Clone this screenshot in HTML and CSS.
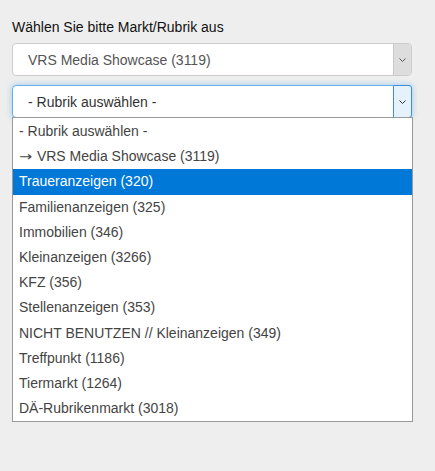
FILE: index.html
```html
<!DOCTYPE html>
<html lang="de">
<head>
    <meta charset="UTF-8">
    <meta name="viewport" content="width=device-width, initial-scale=1.0">
    <title>Markt/Rubrik</title>
    <link rel="stylesheet" href="styles.css">
</head>
<body>
    <div class="rubrik-form">
        <div class="field-label">Wählen Sie bitte Markt/Rubrik aus</div>

        <div class="select">
            <span class="select-value">VRS Media Showcase (3119)</span>
            <span class="select-arrow">
                <svg width="7" height="4" viewBox="0 0 7 4"><path d="M0.5 0.5 L3.5 3.5 L6.5 0.5" fill="none" stroke="#555" stroke-width="1"/></svg>
            </span>
        </div>

        <div class="dropdown">
            <div class="select select-open">
                <span class="select-value">- Rubrik auswählen -</span>
                <span class="select-arrow">
                    <svg width="7" height="4" viewBox="0 0 7 4"><path d="M0.5 0.5 L3.5 3.5 L6.5 0.5" fill="none" stroke="#333" stroke-width="1"/></svg>
                </span>
            </div>
            <ul class="options">
                <li>- Rubrik auswählen -</li>
                <li><span class="sub-arrow">&rarr;</span> VRS Media Showcase (3119)</li>
                <li class="selected">Traueranzeigen (320)</li>
                <li>Familienanzeigen (325)</li>
                <li>Immobilien (346)</li>
                <li>Kleinanzeigen (3266)</li>
                <li>KFZ (356)</li>
                <li>Stellenanzeigen (353)</li>
                <li>NICHT BENUTZEN // Kleinanzeigen (349)</li>
                <li>Treffpunkt (1186)</li>
                <li>Tiermarkt (1264)</li>
                <li>DÄ-Rubrikenmarkt (3018)</li>
            </ul>
        </div>
    </div>
</body>
</html>
```

FILE: styles.css
```css
body {
    background-color: #eeeeee;
    color: #333;
    font-family: Arial, "Liberation Sans", sans-serif;
    margin: 0;
    padding: 0;
}
.rubrik-form {
    padding: 17px 12px;
    width: 400px;
}
.field-label {
    font-size: 14px;
    line-height: 20px;
    color: #111;
    margin-bottom: 6px;
}
.select {
    display: flex;
    align-items: stretch;
    height: 33px;
    box-sizing: border-box;
    background: white;
    border: 1px solid #ccc;
    border-radius: 4px;
    margin-bottom: 9px;
}
.select-value {
    flex: 1;
    display: flex;
    align-items: center;
    padding-left: 15px;
    font-size: 14px;
    color: #555;
}
.select-arrow {
    width: 17px;
    display: flex;
    align-items: center;
    justify-content: center;
    background: #dddddd;
    border-left: 1px solid #c8c8c8;
    border-radius: 0 3px 3px 0;
}
.select-open {
    border-color: #66afe9;
    box-shadow: 0 0 6px rgba(102, 175, 233, 0.6);
    margin-bottom: 0;
}
.select-open .select-value {
    color: #333;
}
.select-open .select-arrow {
    background: #e5f1fb;
    border: 1px solid #3c8fdd;
    margin: -1px -1px -1px 0;
    border-radius: 0 3px 3px 0;
}
.options {
    position: relative;
    width: 401px;
    box-sizing: border-box;
    margin: -1px 0 0;
    padding: 1px 0 0;
    list-style: none;
    background: white;
    border: 1px solid #999;
}
.options li {
    height: 25.2px;
    line-height: 25.2px;
    padding-left: 6px;
    font-size: 14px;
    color: #444;
    white-space: nowrap;
}
.options li.selected {
    background: #0078d7;
    color: white;
}
.sub-arrow {
    display: inline-block;
    width: 14px;
    font-family: "DejaVu Sans", sans-serif;
    font-size: 13px;
    transform: scaleX(1.2);
    transform-origin: left center;
}
```
